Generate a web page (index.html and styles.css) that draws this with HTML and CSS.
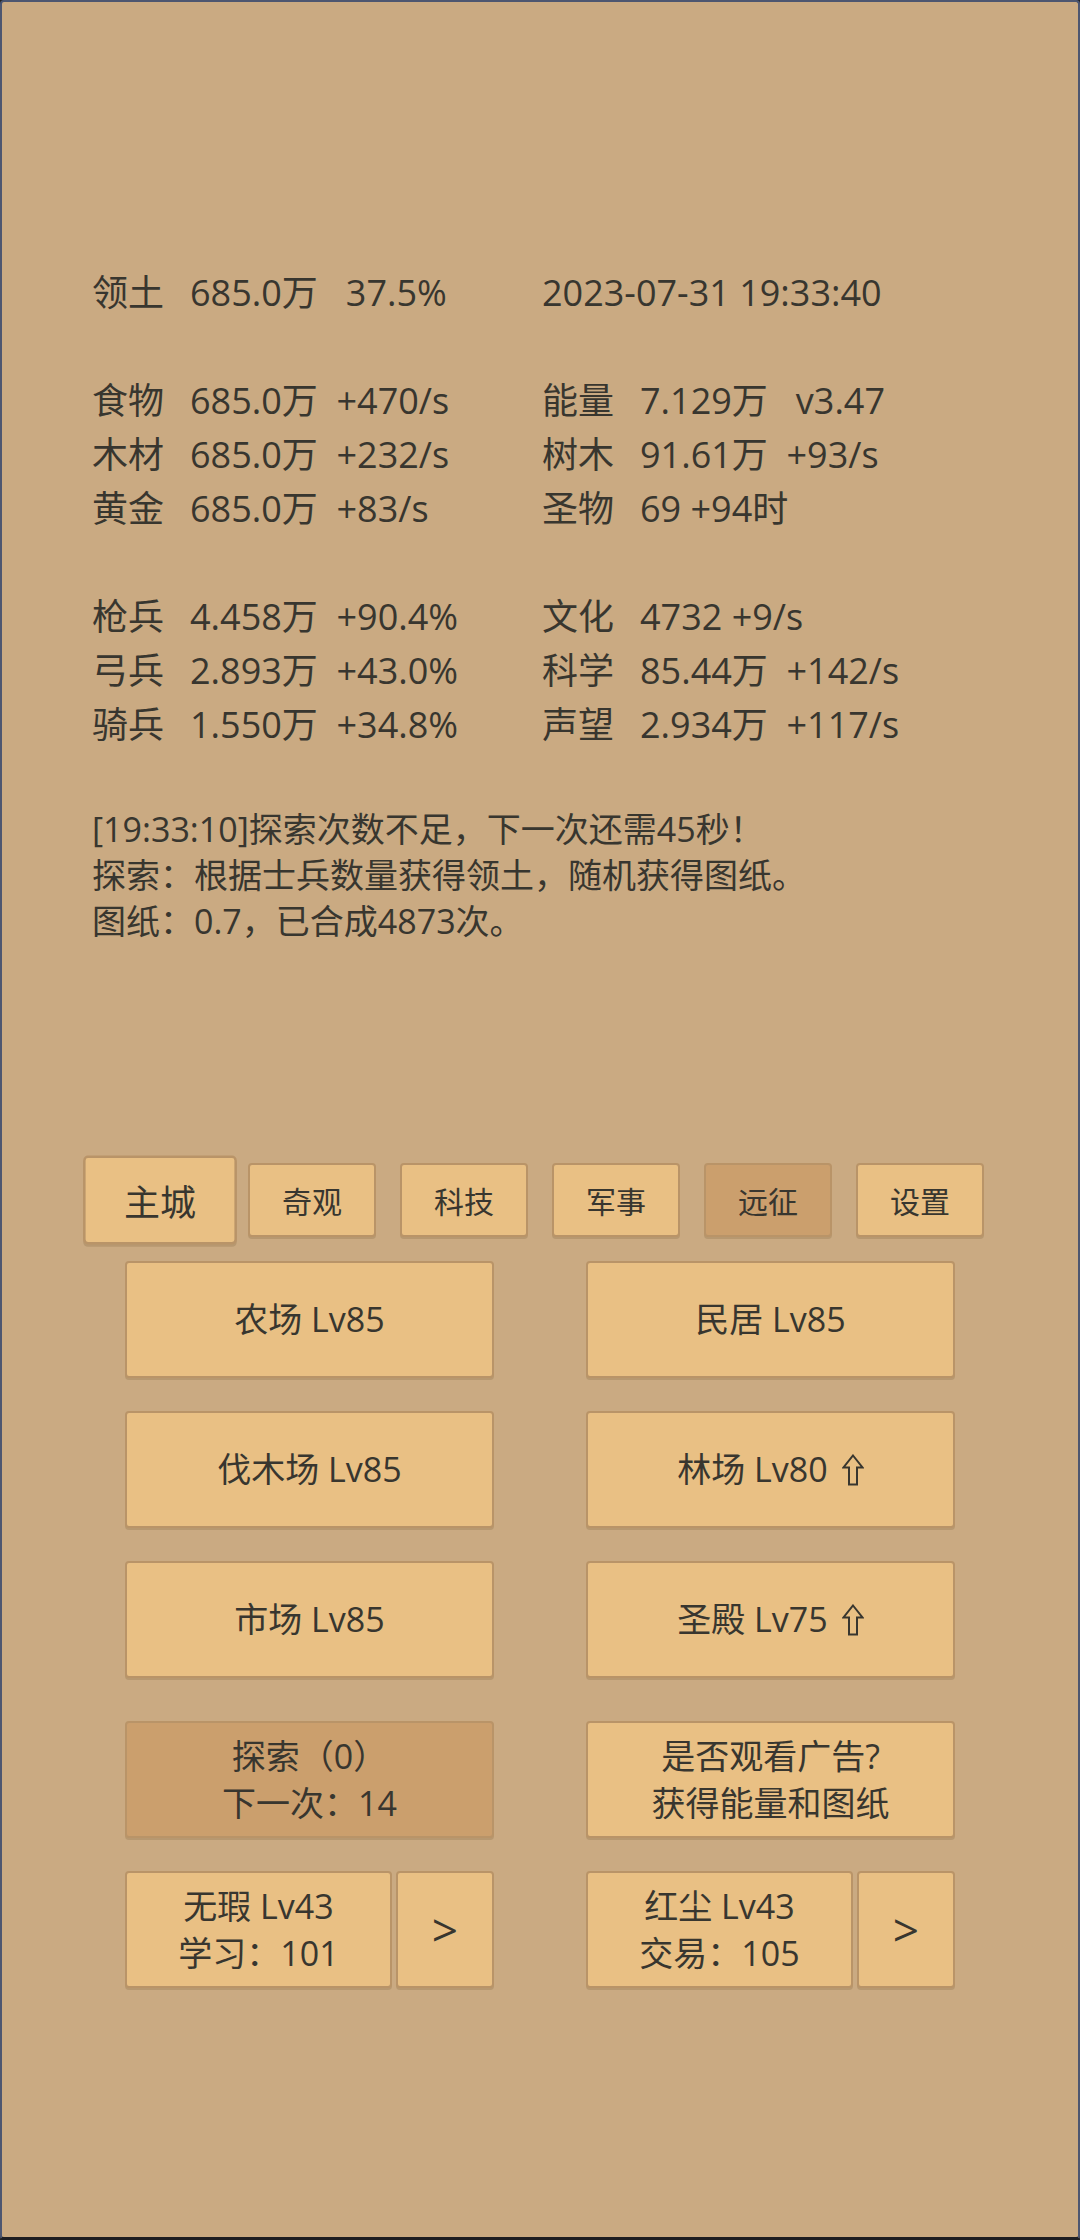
FILE: index.html
```html
<!DOCTYPE html>
<html lang="zh-CN">
<head>
  <meta charset="UTF-8">
  <meta name="viewport" content="width=device-width, initial-scale=1.0">
  <title>领土</title>
  <link rel="stylesheet" href="styles.css">
</head>
<body>
  <div class="screen">
    <!-- Resource overview -->
    <section class="stats">
      <div class="line"><span class="label">领土</span>685.0万   37.5%</div>
      <div class="line">2023-07-31 19:33:40</div>
      <div class="blank"></div>
      <div class="line"><span class="label">食物</span>685.0万  +470/s</div>
      <div class="line"><span class="label">能量</span>7.129万   v3.47</div>
      <div class="line"><span class="label">木材</span>685.0万  +232/s</div>
      <div class="line"><span class="label">树木</span>91.61万  +93/s</div>
      <div class="line"><span class="label">黄金</span>685.0万  +83/s</div>
      <div class="line"><span class="label">圣物</span>69 +94时</div>
      <div class="blank"></div>
      <div class="line"><span class="label">枪兵</span>4.458万  +90.4%</div>
      <div class="line"><span class="label">文化</span>4732 +9/s</div>
      <div class="line"><span class="label">弓兵</span>2.893万  +43.0%</div>
      <div class="line"><span class="label">科学</span>85.44万  +142/s</div>
      <div class="line"><span class="label">骑兵</span>1.550万  +34.8%</div>
      <div class="line"><span class="label">声望</span>2.934万  +117/s</div>
    </section>

    <!-- Message log -->
    <section class="log">
      <p>[19:33:10]探索次数不足，下一次还需45秒！</p>
      <p>探索：根据士兵数量获得领土，随机获得图纸。</p>
      <p>图纸：0.7，已合成4873次。</p>
    </section>

    <!-- Tabs -->
    <nav class="tabs">
      <button class="tab active">主城</button>
      <button class="tab">奇观</button>
      <button class="tab">科技</button>
      <button class="tab">军事</button>
      <button class="tab pressed">远征</button>
      <button class="tab">设置</button>
    </nav>

    <!-- Buildings -->
    <section class="grid">
      <button class="btn">农场 Lv85</button>
      <button class="btn">民居 Lv85</button>
      <button class="btn">伐木场 Lv85</button>
      <button class="btn">林场 Lv80 <svg class="up" viewBox="0 0 22 32" width="22" height="32"><path d="M11 1.5 L20.5 13.5 H15 V30.5 H7 V13.5 H1.5 Z"/></svg></button>
      <button class="btn">市场 Lv85</button>
      <button class="btn">圣殿 Lv75 <svg class="up" viewBox="0 0 22 32" width="22" height="32"><path d="M11 1.5 L20.5 13.5 H15 V30.5 H7 V13.5 H1.5 Z"/></svg></button>
    </section>

    <!-- Actions -->
    <section class="grid actions">
      <button class="btn two pressed">探索（0）<br>下一次：14</button>
      <button class="btn two">是否观看广告?<br>获得能量和图纸</button>
      <div class="pair">
        <button class="btn two">无瑕 Lv43<br>学习：101</button>
        <button class="btn next">&gt;</button>
      </div>
      <div class="pair">
        <button class="btn two">红尘 Lv43<br>交易：105</button>
        <button class="btn next">&gt;</button>
      </div>
    </section>
  </div>
</body>
</html>
```

FILE: styles.css
```css
/* Global */
body {
  margin: 0;
  padding: 0;
  background-color: #222;
  font-family: "Open Sans", "Noto Sans CJK SC", sans-serif;
  color: #38362f;
}

.screen {
  box-sizing: border-box;
  width: 1080px;
  height: 2240px;
  background-color: #caaa82;
  border: 2px solid #4d5670;
  border-bottom: 3px solid #1e1e22;
  border-radius: 4px;
  padding-top: 264px;
  display: flex;
  flex-direction: column;
}

/* Stats */
.stats {
  display: grid;
  grid-template-columns: 450px 1fr;
  grid-auto-rows: 54px;
  padding-left: 90px;
  font-size: 36px;
}

.stats .line {
  line-height: 54px;
  white-space: pre;
}

.stats .label {
  display: inline-block;
  width: 98px;
}

.stats .blank {
  grid-column: 1 / -1;
}

/* Log */
.log {
  margin-top: 54px;
  padding-left: 90px;
  font-size: 34px;
  line-height: 46px;
}

.log p {
  margin: 0;
}

/* Tabs */
.tabs {
  display: flex;
  gap: 24px;
  margin-top: 219px;
  padding-left: 94px;
}

.tab {
  width: 128px;
  height: 74px;
  font-family: inherit;
  font-size: 30px;
  color: #38362f;
  background-color: #e9c084;
  border: 2px solid #b99468;
  border-radius: 4px;
  box-shadow: 0 2px 0 rgba(110, 80, 40, 0.2);
  padding: 0;
}

.tab.active {
  transform: scale(1.2);
}

.tab.pressed {
  background-color: #cb9f6d;
}

/* Buttons */
.grid {
  display: grid;
  grid-template-columns: 369px 369px;
  grid-auto-rows: 117px;
  column-gap: 92px;
  row-gap: 33px;
  margin-top: 24px;
  padding-left: 123px;
}

.grid.actions {
  margin-top: 43px;
}

.btn {
  display: flex;
  align-items: center;
  justify-content: center;
  gap: 8px;
  font-family: inherit;
  font-size: 34px;
  line-height: 47px;
  color: #38362f;
  background-color: #e9c084;
  border: 2px solid #b99468;
  border-radius: 4px;
  box-shadow: 0 2px 0 rgba(110, 80, 40, 0.2);
  padding: 0;
}

.btn.two {
  flex-direction: column;
}

.btn.pressed {
  background-color: #cb9f6d;
}

.pair {
  display: flex;
  gap: 4px;
}

.pair .two {
  width: 267px;
}

.pair .next {
  flex: 1;
  font-size: 46px;
}

.up {
  fill: none;
  stroke: #38362f;
  stroke-width: 2;
  margin-left: 6px;
}
```
